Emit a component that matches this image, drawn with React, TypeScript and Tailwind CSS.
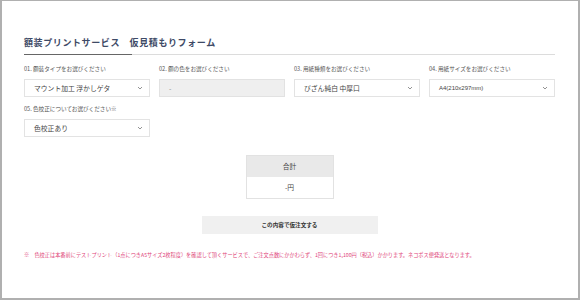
const jp = "font-['Noto_Sans_CJK_JP','Noto_Sans',sans-serif]";

interface FieldProps {
  label: string;
  value: string;
  disabled?: boolean;
  latin?: boolean;
}

const Chevron = () => (
  <svg width="6" height="4" viewBox="0 0 6 4" className="text-[#777]">
    <path d="M1 1 L3 3 L5 1" fill="none" stroke="currentColor" strokeWidth="0.8" />
  </svg>
);

const Field = ({ label, value, disabled, latin }: FieldProps) => (
  <div className="flex flex-col">
    <label className="text-[5.6px] leading-[8px] text-[#555] mb-[6px] whitespace-nowrap">
      {label}
    </label>
    <div
      className={`h-[18px] flex items-center justify-between pl-[9px] pr-[6px] border ${
        disabled ? "bg-[#efefef] border-[#e2e2e2]" : "bg-white border-[#e3e3e3]"
      }`}
    >
      <span
        className={`${latin ? "text-[6px] font-['Liberation_Sans',sans-serif]" : "text-[6.8px]"} ${
          disabled ? "text-[#888]" : "text-[#444]"
        } whitespace-nowrap`}
      >
        {value}
      </span>
      {!disabled && <Chevron />}
    </div>
  </div>
);

export default function App() {
  return (
    <div
      className={`${jp} w-[580px] h-[300px] bg-white border-t border-r-2 border-b-2 border-l-2 border-[#b0b0b0] overflow-hidden`}
    >
      <div className="pl-[22px] pr-[23px] pt-[35px]">
        <h1 className="text-[9px] leading-[14px] font-bold tracking-[0.6px] text-[#3e4a66] whitespace-nowrap">
          額装プリントサービス　仮見積もりフォーム
        </h1>
        <div className="mt-[4px] flex h-px">
          <div className="w-[108px] bg-[#666]" />
          <div className="flex-1 bg-[#dcdcdc]" />
        </div>

        <div className="mt-[10px] grid grid-cols-4 gap-x-[9px] gap-y-[8px]">
          <Field label="01. 額装タイプをお選びください" value="マウント加工 浮かしゲタ" />
          <Field label="02. 額の色をお選びください" value="-" disabled />
          <Field label="03. 用紙種類をお選びください" value="びざん純白 中厚口" />
          <Field label="04. 用紙サイズをお選びください" value="A4(210x297mm)" latin />
          <Field label="05. 色校正についてお選びください※" value="色校正あり" />
        </div>

        <div className="mt-[18px] flex justify-center">
          <div className="w-[88px] border border-[#e2e2e2] text-[6.8px] text-[#444] text-center">
            <div className="h-[21px] flex items-center justify-center bg-[#e9e9e9]">合計</div>
            <div className="h-[21px] flex items-center justify-center bg-white">-円</div>
          </div>
        </div>

        <div className="mt-[17px] flex justify-center">
          <button className="w-[176px] h-[18px] bg-[#f0f0f0] text-[5.6px] font-bold text-[#333]">
            この内容で仮注文する
          </button>
        </div>

        <p className="mt-[17px] text-[5.2px] leading-[8px] text-[#e0457a] whitespace-nowrap">
          ※　色校正は本番前にテストプリント（1点につきA5サイズ2枚程度）を確認して頂くサービスで、ご注文点数にかかわらず、1回につき1,100円（税込）かかります。ネコポス便発送となります。
        </p>
      </div>
    </div>
  );
}
